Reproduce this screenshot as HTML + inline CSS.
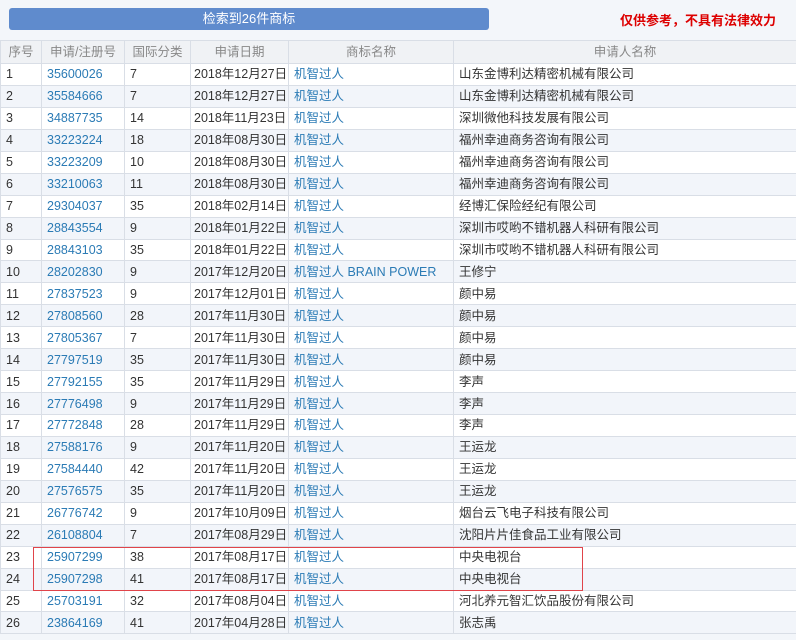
<!DOCTYPE html><html><head><meta charset="utf-8"><style>
body{margin:0;width:796px;height:640px;background:#f3f6fa;font-family:"Liberation Sans","Noto Sans CJK SC",sans-serif;font-size:12.5px;color:#333;position:relative;overflow:hidden}
.btn{position:absolute;left:9px;top:8px;width:480px;height:22px;background:#5f8bcd;border-radius:3px;color:#fff;text-align:center;line-height:22px;font-size:13px}
.warn{position:absolute;left:620px;top:10px;color:#d00;font-weight:bold;font-size:13px}
table{position:absolute;left:0;top:40px;border-collapse:collapse;width:797px;table-layout:fixed}
tr{height:21.95px}
td,th{border:1px solid #d9dee6;height:20px;line-height:20px;padding:0 0 0 5px;white-space:nowrap;overflow:hidden;font-weight:normal;vertical-align:middle}
th{background:#f0f2f5;color:#888;text-align:center;height:22px;padding:0}
tr:nth-child(odd) td{background:#f2f5fa}
tr:nth-child(even) td{background:#fff}
td:nth-child(2),td:nth-child(5){color:#2b7bb5}
td:nth-child(4){padding:0 0 0 3px}
.box{position:absolute;left:33px;top:547px;width:548px;height:42px;border:1px solid #e0444a}
</style></head><body>
<div class="btn">检索到26件商标</div>
<div class="warn">仅供参考，不具有法律效力</div>
<table>
<colgroup><col style="width:41px"><col style="width:83px"><col style="width:66px"><col style="width:98px"><col style="width:165px"><col></colgroup>
<tr><th>序号</th><th>申请/注册号</th><th>国际分类</th><th>申请日期</th><th>商标名称</th><th>申请人名称</th></tr>
<tr><td>1</td><td>35600026</td><td>7</td><td>2018年12月27日</td><td>机智过人</td><td>山东金博利达精密机械有限公司</td></tr>
<tr><td>2</td><td>35584666</td><td>7</td><td>2018年12月27日</td><td>机智过人</td><td>山东金博利达精密机械有限公司</td></tr>
<tr><td>3</td><td>34887735</td><td>14</td><td>2018年11月23日</td><td>机智过人</td><td>深圳微他科技发展有限公司</td></tr>
<tr><td>4</td><td>33223224</td><td>18</td><td>2018年08月30日</td><td>机智过人</td><td>福州幸迪商务咨询有限公司</td></tr>
<tr><td>5</td><td>33223209</td><td>10</td><td>2018年08月30日</td><td>机智过人</td><td>福州幸迪商务咨询有限公司</td></tr>
<tr><td>6</td><td>33210063</td><td>11</td><td>2018年08月30日</td><td>机智过人</td><td>福州幸迪商务咨询有限公司</td></tr>
<tr><td>7</td><td>29304037</td><td>35</td><td>2018年02月14日</td><td>机智过人</td><td>经博汇保险经纪有限公司</td></tr>
<tr><td>8</td><td>28843554</td><td>9</td><td>2018年01月22日</td><td>机智过人</td><td>深圳市哎哟不错机器人科研有限公司</td></tr>
<tr><td>9</td><td>28843103</td><td>35</td><td>2018年01月22日</td><td>机智过人</td><td>深圳市哎哟不错机器人科研有限公司</td></tr>
<tr><td>10</td><td>28202830</td><td>9</td><td>2017年12月20日</td><td>机智过人 BRAIN POWER</td><td>王修宁</td></tr>
<tr><td>11</td><td>27837523</td><td>9</td><td>2017年12月01日</td><td>机智过人</td><td>颜中易</td></tr>
<tr><td>12</td><td>27808560</td><td>28</td><td>2017年11月30日</td><td>机智过人</td><td>颜中易</td></tr>
<tr><td>13</td><td>27805367</td><td>7</td><td>2017年11月30日</td><td>机智过人</td><td>颜中易</td></tr>
<tr><td>14</td><td>27797519</td><td>35</td><td>2017年11月30日</td><td>机智过人</td><td>颜中易</td></tr>
<tr><td>15</td><td>27792155</td><td>35</td><td>2017年11月29日</td><td>机智过人</td><td>李声</td></tr>
<tr><td>16</td><td>27776498</td><td>9</td><td>2017年11月29日</td><td>机智过人</td><td>李声</td></tr>
<tr><td>17</td><td>27772848</td><td>28</td><td>2017年11月29日</td><td>机智过人</td><td>李声</td></tr>
<tr><td>18</td><td>27588176</td><td>9</td><td>2017年11月20日</td><td>机智过人</td><td>王运龙</td></tr>
<tr><td>19</td><td>27584440</td><td>42</td><td>2017年11月20日</td><td>机智过人</td><td>王运龙</td></tr>
<tr><td>20</td><td>27576575</td><td>35</td><td>2017年11月20日</td><td>机智过人</td><td>王运龙</td></tr>
<tr><td>21</td><td>26776742</td><td>9</td><td>2017年10月09日</td><td>机智过人</td><td>烟台云飞电子科技有限公司</td></tr>
<tr><td>22</td><td>26108804</td><td>7</td><td>2017年08月29日</td><td>机智过人</td><td>沈阳片片佳食品工业有限公司</td></tr>
<tr><td>23</td><td>25907299</td><td>38</td><td>2017年08月17日</td><td>机智过人</td><td>中央电视台</td></tr>
<tr><td>24</td><td>25907298</td><td>41</td><td>2017年08月17日</td><td>机智过人</td><td>中央电视台</td></tr>
<tr><td>25</td><td>25703191</td><td>32</td><td>2017年08月04日</td><td>机智过人</td><td>河北养元智汇饮品股份有限公司</td></tr>
<tr><td>26</td><td>23864169</td><td>41</td><td>2017年04月28日</td><td>机智过人</td><td>张志禹</td></tr>
</table>
<div class="box"></div>
</body></html>
